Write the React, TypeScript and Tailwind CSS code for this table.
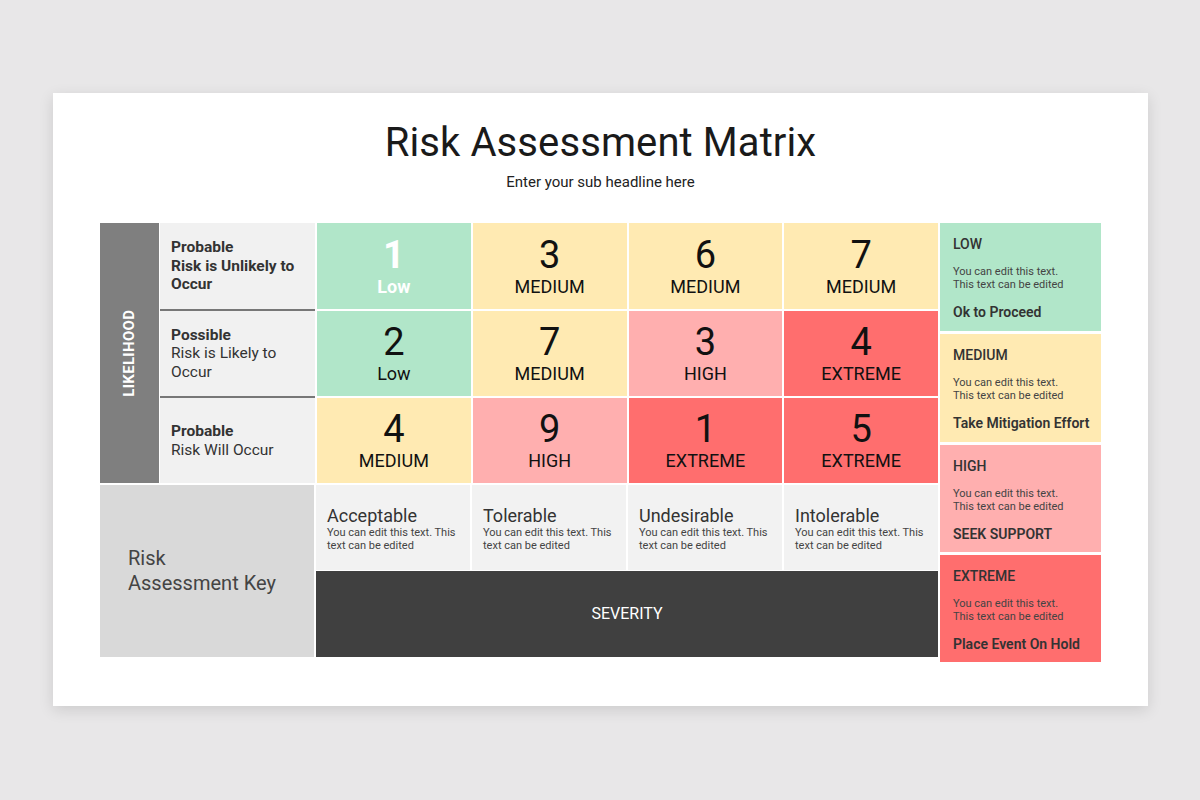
import React from "react";

type Cell = { n: string; l: string; c: string; white?: boolean };

const rows: Cell[][] = [
  [
    { n: "1", l: "Low", c: "bg-[#b1e6c9]", white: true },
    { n: "3", l: "MEDIUM", c: "bg-[#ffeab2]" },
    { n: "6", l: "MEDIUM", c: "bg-[#ffeab2]" },
    { n: "7", l: "MEDIUM", c: "bg-[#ffeab2]" },
  ],
  [
    { n: "2", l: "Low", c: "bg-[#b1e6c9]" },
    { n: "7", l: "MEDIUM", c: "bg-[#ffeab2]" },
    { n: "3", l: "HIGH", c: "bg-[#ffafaf]" },
    { n: "4", l: "EXTREME", c: "bg-[#ff6e6e]" },
  ],
  [
    { n: "4", l: "MEDIUM", c: "bg-[#ffeab2]" },
    { n: "9", l: "HIGH", c: "bg-[#ffafaf]" },
    { n: "1", l: "EXTREME", c: "bg-[#ff6e6e]" },
    { n: "5", l: "EXTREME", c: "bg-[#ff6e6e]" },
  ],
];

const legend = [
  { t: "LOW", a: "Ok to Proceed", c: "bg-[#b1e6c9]", h: "h-[108px]" },
  { t: "MEDIUM", a: "Take Mitigation Effort", c: "bg-[#ffeab2]", h: "h-[108px]" },
  { t: "HIGH", a: "SEEK SUPPORT", c: "bg-[#ffafaf]", h: "h-[107px]" },
  { t: "EXTREME", a: "Place Event On Hold", c: "bg-[#ff6e6e]", h: "h-[107px]" },
];

const severity = ["Acceptable", "Tolerable", "Undesirable", "Intolerable"];

export default function App() {
  return (
    <div
      className="w-[1200px] h-[800px] bg-[#e8e7e8] pt-[93px] pl-[53px]"
      style={{ fontFamily: "Roboto, 'Liberation Sans', sans-serif" }}
    >
      <div className="w-[1095px] h-[613px] bg-white shadow-[0_4px_14px_rgba(0,0,0,0.12)] flex flex-col items-center">
        <h1 className="mt-[24px] text-[40px] leading-[52px] text-[#1a1a1a] tracking-[0.1px]">
          Risk Assessment Matrix
        </h1>
        <p className="mt-[3px] text-[15px] leading-[20px] text-[#222]">Enter your sub headline here</p>

        <div className="mt-[31px] self-start ml-[47px] flex gap-[2px]">
          {/* Left section */}
          <div className="flex flex-col gap-[2px] w-[838px]">
            <div className="flex h-[260px]">
              <div className="w-[59px] bg-[#7f7f7f] flex items-center justify-center">
                <span className="-rotate-90 whitespace-nowrap text-white font-bold text-[15px] tracking-[0.3px]">
                  LIKELIHOOD
                </span>
              </div>
              <div className="ml-[1px] w-[155px] bg-[#777] flex flex-col gap-[2px]">
                <div className="h-[86px] bg-[#f1f1f1] flex flex-col justify-center pl-[11px] text-[15.5px] leading-[18.5px] text-[#333] font-bold">
                  <span>Probable</span>
                  <span>Risk is Unlikely to Occur</span>
                </div>
                <div className="h-[85px] bg-[#f1f1f1] flex flex-col justify-center pl-[11px] text-[15.5px] leading-[18.5px] text-[#333]">
                  <span className="font-bold">Possible</span>
                  <span>Risk is Likely to Occur</span>
                </div>
                <div className="h-[85px] bg-[#f1f1f1] flex flex-col justify-center pl-[11px] text-[15.5px] leading-[18.5px] text-[#333]">
                  <span className="font-bold">Probable</span>
                  <span>Risk Will Occur</span>
                </div>
              </div>
              <div className="ml-[2px] flex-1 grid grid-cols-4 grid-rows-[86px_85px_85px] gap-[2px]">
                {rows.flat().map((c, i) => (
                  <div
                    key={i}
                    className={`${c.c} flex flex-col items-center justify-center ${
                      c.white ? "text-white font-bold" : "text-[#111]"
                    }`}
                  >
                    <span className="text-[38px] leading-[40px]">{c.n}</span>
                    <span className="text-[18px] leading-[22px] mt-[1px]">{c.l}</span>
                  </div>
                ))}
              </div>
            </div>

            <div className="flex h-[172px] gap-[2px]">
              <div className="w-[214px] bg-[#d9d9d9] flex flex-col justify-center pl-[28px] text-[20px] leading-[25px] text-[#444]">
                <span>Risk</span>
                <span>Assessment Key</span>
              </div>
              <div className="flex-1 flex flex-col gap-[1px]">
                <div className="h-[85px] grid grid-cols-4 gap-[2px]">
                  {severity.map((s) => (
                    <div key={s} className="bg-[#f2f2f2] pl-[11px] pt-[21px] text-[#333]">
                      <div className="text-[18px] leading-[20px]">{s}</div>
                      <div className="text-[11px] leading-[13px] text-[#444] pr-[4px]">
                        You can edit this text. This text can be edited
                      </div>
                    </div>
                  ))}
                </div>
                <div className="flex-1 bg-[#404040] flex items-center justify-center text-white text-[16px]">
                  SEVERITY
                </div>
              </div>
            </div>
          </div>

          {/* Legend */}
          <div className="w-[161px] flex flex-col gap-[3px]">
            {legend.map((l) => (
              <div key={l.t} className={`${l.c} ${l.h} pl-[13px] pt-[13px] text-[#333]`}>
                <div className="text-[14px] leading-[16px] font-medium">{l.t}</div>
                <div className="mt-[13px] text-[11px] leading-[13px] text-[#444]">
                  You can edit this text.
                  <br />
                  This text can be edited
                </div>
                <div className="mt-[13px] text-[14px] leading-[16px] font-semibold">{l.a}</div>
              </div>
            ))}
          </div>
        </div>
      </div>
    </div>
  );
}
